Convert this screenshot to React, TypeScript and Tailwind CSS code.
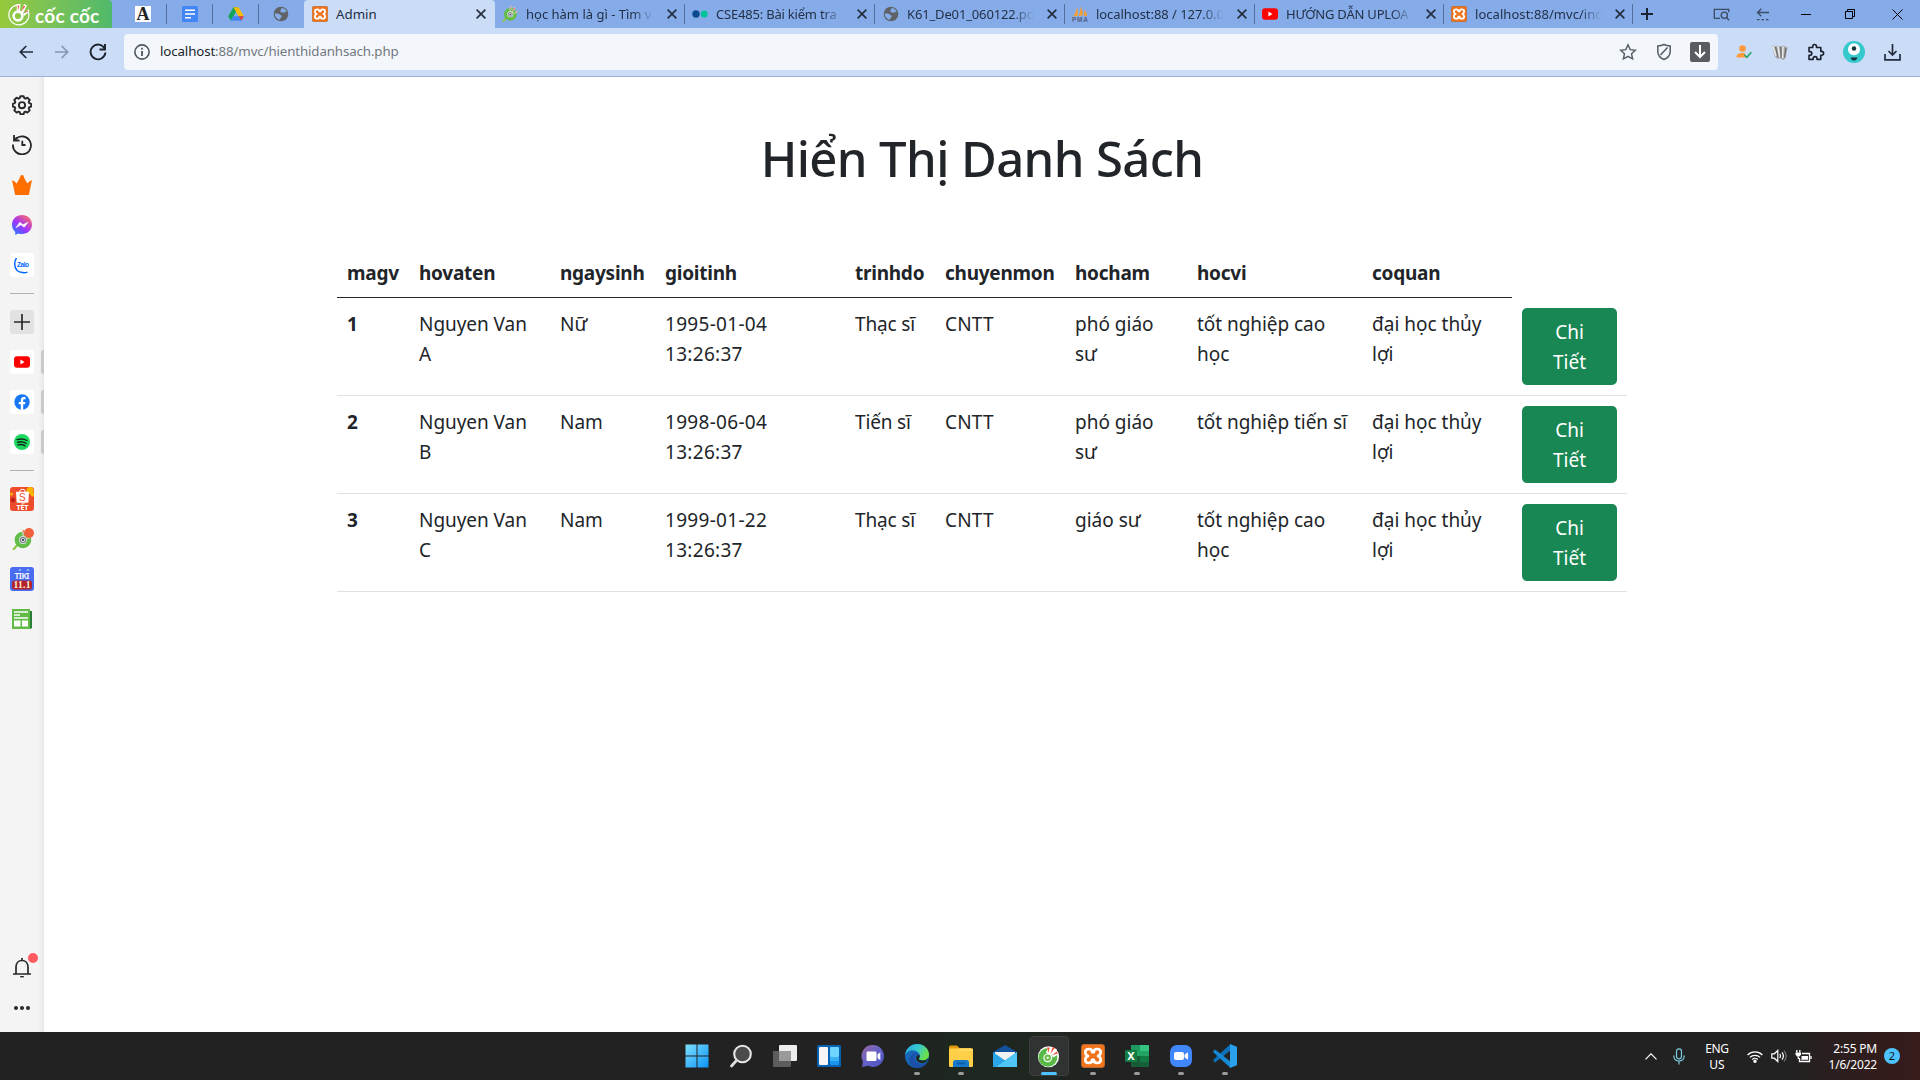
import React from "react";
import type { ReactNode } from "react";

/* ---------- shared logos ---------- */

function CocCocLogo({ size, ring = false }: { size: number; ring?: boolean }) {
  if (ring) {
    return (
      <svg width={size} height={size} viewBox="0 0 24 24">
        <path d="M9.500 3.200A10 10 0 1 0 21.300 9.500" fill="none" stroke="#fff" strokeWidth="1.200" />
        <circle cx="11" cy="14" r="4.400" fill="none" stroke="#fff" strokeWidth="2.600" />
        <path d="M9.800 9.500L9.500 2h4l-.5 8zM14 10l3-8 3 1.500-4 8zM16 12l6-5v3l-5 4z" fill="#fff" />
        <path d="M11 9l-.3-5.500h1.600zM14 9.500l2.800-6 1.500 1zM16 11.300l4.500-2.800.5 1.200z" fill="#f0523a" />
      </svg>
    );
  }
  return (
    <svg width={size} height={size} viewBox="0 0 24 24">
      <circle cx="12" cy="12.300" r="11" fill="#fff" />
      <circle cx="11.400" cy="13" r="6.800" fill="none" stroke="#58b947" strokeWidth="6" />
      <path d="M11 3L9.500 8l3 2 2.500.500L17 13l5-3-2-6z" fill="#fff" />
      <circle cx="11.200" cy="13.400" r="4.600" fill="#fff" />
      <circle cx="11.200" cy="13.400" r="2.300" fill="none" stroke="#6cc04a" strokeWidth="2.200" />
      <path d="M11.800 8.300L10.500 2.500h2.800zM14 9.500L16.300 2l2.200 1.200zM15.800 10.800l4.800-4 1 2z" fill="#f0523a" />
    </svg>
  );
}

function CocCocSearch({ size }: { size: number }) {
  return (
    <svg width={size} height={size} viewBox="0 0 24 24">
      <path d="M2 23l6-7" stroke="#8bc63f" strokeWidth="2.600" strokeLinecap="round" />
      <circle cx="12.500" cy="12.500" r="7" fill="#e6efe6" stroke="#62bd49" strokeWidth="5" />
      <circle cx="12.500" cy="12.500" r="3" fill="#e8e8ee" stroke="#7f8a96" strokeWidth="1.500" />
      <circle cx="12.500" cy="12.500" r="1.300" fill="#444" />
      <path d="M12.500 8.500l-.7-7.500h2.400zM15 9.400l3-7.600 2.300 1.400zM17 11l5.500-3.500.5 2z" fill="#f0604a" stroke="#dff0d8" strokeWidth=".7" />
    </svg>
  );
}

function Xampp({ size }: { size: number }) {
  return (
    <svg width={size} height={size} viewBox="0 0 24 24">
      <rect x=".5" y=".5" width="23" height="23" rx="2.400" fill="#f0741c" stroke="#b9662c" />
      <path
        d="M8 5C5.500 5 4.300 6.500 4.300 8.300c0 1.700 1 2.900 2.700 3.700-1.700.8-2.700 2-2.700 3.700C4.300 17.500 5.500 19 8 19c2.200 0 3.100-1.300 3.200-3.100h1.600c.1 1.800 1 3.100 3.200 3.100 2.500 0 3.700-1.500 3.700-3.300 0-1.700-1-2.900-2.700-3.700 1.700-.8 2.700-2 2.700-3.700C19.700 6.500 18.500 5 16 5c-2.200 0-3.100 1.300-3.200 3.100h-1.600C11.100 6.300 10.200 5 8 5z"
        fill="none"
        stroke="#fff"
        strokeWidth="2.700"
        strokeLinejoin="round"
      />
    </svg>
  );
}

function YouTube({ size }: { size: number }) {
  return (
    <svg width={size} height={size} viewBox="0 0 16 16">
      <rect x="0" y="2.300" width="16" height="11.400" rx="3" fill="#f00" />
      <path d="M6.400 5.600v4.800L10.500 8z" fill="#fff" />
    </svg>
  );
}

function Globe() {
  return (
    <svg width="16" height="16" viewBox="0 0 16 16">
      <circle cx="8" cy="8" r="7.300" fill="#5f6368" />
      <path
        d="M1.800 7.500c2.200-.3 4.200 0 5 1 .5.800 2 .6 2 1.800 0 1.300-1.800 1.200-1.800 3.400-2.800-.2-5.300-2.700-5.200-6.200zM8.500 2c2.300.2 4.200 1.500 5.200 3.600-1 .3-1.500 1.100-2.900.9-1.500-.2-3 .5-3.400-.9-.3-1.500 1.200-1.900 1.100-3.600z"
        fill="#85ace9"
      />
    </svg>
  );
}

/* ---------- tab strip ---------- */

function CloseX() {
  return (
    <svg width="10" height="10" viewBox="0 0 10 10" className="shrink-0">
      <path d="M.6.6l8.800 8.800M9.400.6L.6 9.400" stroke="#222c3c" strokeWidth="1.600" />
    </svg>
  );
}

function PinnedTab({ width, last, children }: { width: string; last?: boolean; children: ReactNode }) {
  return (
    <div className={`${width} relative flex h-7 items-center justify-center pr-px`}>
      {children}
      {!last && <span className="absolute right-0 top-1 h-5 w-px bg-[#54709c]" />}
    </div>
  );
}

function Tab({ width, icon, title, tracking, pad }: { width: string; icon: ReactNode; title: string; tracking: string; pad: string }) {
  return (
    <div className={`${width} ${pad} relative flex h-7 items-center pr-2`}>
      <span className="mr-2 flex w-4 shrink-0 justify-center">{icon}</span>
      <span
        className={`${tracking} mr-2 flex-1 overflow-hidden whitespace-nowrap text-[13px] leading-7 text-[#233048] [mask-image:linear-gradient(to_right,black_80%,transparent_96%)]`}
      >
        {title}
      </span>
      <CloseX />
      <span className="absolute right-0 top-1 h-5 w-px bg-[#54709c]" />
    </div>
  );
}

function TabStrip() {
  return (
    <div className="flex h-7 bg-[#85ace9]">
      <div className="flex h-7 w-28 shrink-0 items-center rounded-tr bg-linear-to-r from-[#97c93c] to-[#4fb96b] pl-[7px]">
        <CocCocLogo size={24} ring />
        <span className="ml-1 whitespace-nowrap pt-[3px] font-[Lato] text-[19px] font-bold leading-6 tracking-[0.25px] text-white">
          cốc cốc
        </span>
      </div>
      <div className="flex w-48 shrink-0 pl-2">
        <PinnedTab width="w-[47px]">
          <span className="flex h-4 w-4 items-center justify-center bg-white font-['Liberation_Serif'] text-[18px] font-bold leading-4 text-[#222]">A</span>
        </PinnedTab>
        <PinnedTab width="w-[46px]">
          <svg width="16" height="16" viewBox="0 0 16 16">
            <rect width="16" height="16" rx="1.500" fill="#4285f4" />
            <path d="M3 4.200h10M3 8h10M3 11.800h6" stroke="#fff" strokeWidth="1.600" />
          </svg>
        </PinnedTab>
        <PinnedTab width="w-[46px]">
          <svg width="16" height="14" viewBox="0 0 16 14">
            <path d="M5.400.3h5.200L8 4.900 2.700 13.800.2 9.300z" fill="#12a55b" />
            <path d="M5.400.3h5.200l5.200 9h-5.200z" fill="#fcbc05" />
            <path d="M5.300 9.300h10.500l-2.500 4.400H2.700z" fill="#4285f4" />
            <path d="M10.600 9.300h5.200l-2.400 4.300z" fill="#ea4335" />
          </svg>
        </PinnedTab>
        <PinnedTab width="w-[45px]" last>
          <Globe />
        </PinnedTab>
      </div>
      <div className="flex h-7 w-[191px] shrink-0 items-center rounded-t bg-[#cbdcf6] pl-2 pr-[9px]">
        <Xampp size={16} />
        <span className="ml-2 flex-1 text-[13.3px] leading-7 text-[#233048]">Admin</span>
        <CloseX />
      </div>
      <Tab width="w-[190px]" pad="pl-[7px]" icon={<CocCocSearch size={16} />} title="học hàm là gì - Tìm v" tracking="tracking-[0px]" />
      <Tab
        width="w-[190px]"
        pad="pl-[7px]"
        icon={
          <svg width="16" height="16" viewBox="0 0 16 16">
            <circle cx="4" cy="8" r="3.700" fill="#0b4a8f" />
            <circle cx="12.200" cy="8" r="3.500" fill="#00c39a" />
          </svg>
        }
        title="CSE485: Bài kiểm tra"
        tracking="tracking-[-0.2px]"
      />
      <Tab width="w-[190px]" pad="pl-[8px]" icon={<Globe />} title="K61_De01_060122.pd" tracking="tracking-[-0.15px]" />
      <Tab
        width="w-[190px]"
        pad="pl-[7px]"
        icon={
          <svg width="16" height="16" viewBox="0 0 16 16">
            <path d="M1 10.500C3 8 4.500 4.500 5 1c1 3 1 6 .5 9zM6.300 10C8 7 8.600 4 8.500.5c2 3 2.500 6 2 9zM11.500 9.800c.8-2 .9-4 .6-6 2 2 3 4 3.200 6z" fill="#f7a032" />
            <text x="0" y="15.500" fontSize="6.500" fontWeight="700" fontFamily="Liberation Sans" fill="#55608a" textLength="16">PMA</text>
          </svg>
        }
        title="localhost:88 / 127.0.0"
        tracking="tracking-[-0.05px]"
      />
      <Tab width="w-[189px]" pad="pl-[7px]" icon={<YouTube size={16} />} title="HƯỚNG DẪN UPLOA" tracking="tracking-[-0.2px]" />
      <Tab width="w-[189px]" pad="pl-[7px]" icon={<Xampp size={16} />} title="localhost:88/mvc/ind" tracking="tracking-[0.05px]" />
      <div className="flex flex-1 items-center">
        <svg width="12" height="12" viewBox="0 0 12 12" className="ml-2">
          <path d="M6 0v12M0 6h12" stroke="#1b2433" strokeWidth="2" />
        </svg>
        <div className="ml-auto flex items-center">
          <span className="flex w-[39px] justify-center">
            <svg width="18" height="13" viewBox="0 0 18 13" fill="none" stroke="#3c4a62" strokeWidth="1.300">
              <path d="M7 10.300H1.300V1.300h14.400v3" />
              <circle cx="11.300" cy="7.200" r="3.100" />
              <path d="M13.500 9.500l2.500 2.800" />
            </svg>
          </span>
          <span className="flex w-[43px] justify-center">
            <svg width="14" height="13" viewBox="0 0 14 13" fill="none" stroke="#3c4a62" strokeWidth="1.300">
              <path d="M13 4.500H1.500M5.300.7L1.500 4.500l3.800 3.800" />
              <path d="M1 11.700h12" strokeDasharray="2.500 2" />
            </svg>
          </span>
          <span className="flex w-[43px] justify-center">
            <span className="h-px w-[10px] bg-black" />
          </span>
          <span className="flex w-[47px] justify-center">
            <svg width="11" height="11" viewBox="0 0 11 11" fill="none" stroke="#000">
              <path d="M.5 2.500h7v7h-7zM2.500 2.500v-2h7v7h-2" />
            </svg>
          </span>
          <span className="flex w-[46px] justify-center">
            <svg width="11" height="11" viewBox="0 0 11 11" fill="none" stroke="#000">
              <path d="M.5.5l10 10M10.500.5l-10 10" />
            </svg>
          </span>
        </div>
      </div>
    </div>
  );
}

/* ---------- address bar ---------- */

function Toolbar() {
  return (
    <div className="flex h-[49px] items-center border-b border-[#a0b0d0] bg-[#cbdcf6]">
      <div className="flex w-31 shrink-0 items-center pl-[19px]">
        <svg width="14" height="14" viewBox="0 0 14 14" fill="none" stroke="#222c3c" strokeWidth="1.700">
          <path d="M14 7H1.500M7.300 1L1.300 7l6 6" />
        </svg>
        <svg width="14" height="14" viewBox="0 0 14 14" fill="none" stroke="#8795b0" strokeWidth="1.700" className="ml-[22px]">
          <path d="M0 7h12.500M6.700 1l6 6-6 6" />
        </svg>
        <svg width="18" height="18" viewBox="0 0 18 18" fill="none" stroke="#1b222e" strokeWidth="1.900" className="ml-5">
          <path d="M15.600 5.500A7.400 7.400 0 1 0 16.400 9.500" />
          <path d="M16 1v5.500h-5.500" />
        </svg>
      </div>
      <div className="flex h-9 w-[1594px] shrink-0 items-center rounded bg-[#f3f7fc] pl-[10px] pr-2">
        <svg width="16" height="16" viewBox="0 0 16 16">
          <circle cx="8" cy="8" r="7.100" fill="none" stroke="#50565f" strokeWidth="1.600" />
          <path d="M8 7v5M8 3.800v1.800" stroke="#50565f" strokeWidth="1.800" />
        </svg>
        <span className="ml-[10px] text-[13.3px] tracking-[-0.12px] text-[#737880]">
          <span className="text-[#22262c]">localhost</span>:88/mvc/hienthidanhsach.php
        </span>
        <div className="ml-auto flex items-center">
          <svg width="18" height="18" viewBox="0 0 18 18" fill="none" stroke="#565b63" strokeWidth="1.400">
            <path d="M9 1.800l2.200 4.800 5.200.6-3.900 3.500 1.100 5.200L9 13.300l-4.600 2.600 1.100-5.200L1.600 7.200l5.200-.6z" />
          </svg>
          <svg width="16" height="18" viewBox="0 0 16 18" fill="none" stroke="#565b63" strokeWidth="1.500" className="ml-[19px]">
            <path d="M8 1.500c2 1 4 1.400 6.200 1.500v5.500c0 4-2.500 6.500-6.200 8-3.700-1.500-6.200-4-6.200-8V3C4 2.900 6 2.500 8 1.500zM4.500 12l7-7.500" />
          </svg>
          <span className="ml-[18px] flex h-5 w-5 items-center justify-center rounded-xs bg-[#5a5c60]">
            <svg width="12" height="14" viewBox="0 0 12 14" fill="none" stroke="#fff" strokeWidth="2">
              <path d="M6 0v12M1 7l5 5 5-5" />
            </svg>
          </span>
        </div>
      </div>
      <div className="flex flex-1 items-center justify-between pl-[18px] pr-[19px]">
        <svg width="16" height="14" viewBox="0 0 16 14">
          <circle cx="6.500" cy="3.600" r="3.300" fill="#ff9a3c" />
          <path d="M.5 12.500c0-3.500 2.500-4.500 6-4.500 1.500 0 2.500.3 3.300.9L8 10.500l2 2z" fill="#ff9a3c" />
          <path d="M8.300 9.800l2.500 2.500 4.500-5" fill="none" stroke="#1fa463" strokeWidth="1.500" />
        </svg>
        <svg width="17" height="17" viewBox="0 0 17 17">
          <path d="M1 1l3.500 1.500L7 1.500l2.500 1L12 1.500l4.500 2-2 10.500-2.500 2-3-2-2.500 1-3-3z" fill="#a5a5a5" />
          <path d="M2 2l3 10M7 2l1.500 11M12 2.500L11.500 14" stroke="#e9e9e9" strokeWidth="1.600" />
          <path d="M4.500 3l2.500 10M9.800 3l.4 10.500M15 4l-1.500 9.500" stroke="#666" strokeWidth="1.100" />
        </svg>
        <svg width="18" height="18" viewBox="0 0 18 18" fill="none" stroke="#1b222e" strokeWidth="1.600" strokeLinejoin="round">
          <path d="M2 4.500h3.700V3.400a1.900 1.900 0 0 1 3.800 0v1.100h4.300v3.900h.9a1.900 1.900 0 0 1 0 3.800h-.9v4.200H10v-.9a1.900 1.900 0 0 0-3.800 0v.9H2v-4h.9a1.900 1.900 0 0 0 0-3.800H2z" />
        </svg>
        <svg width="22" height="22" viewBox="0 0 22 22">
          <circle cx="11" cy="11" r="11" fill="#35c8cd" />
          <circle cx="11" cy="8.300" r="6" fill="#fff" />
          <circle cx="11" cy="7.500" r="2.200" fill="#15343c" />
          <path d="M7.800 16.600h6.400a3.200 2.800 0 0 1-6.400 0z" fill="#15343c" />
        </svg>
        <svg width="17" height="17" viewBox="0 0 17 17" fill="none" stroke="#222c3c" strokeWidth="1.700">
          <path d="M8.500 0v10.500M4.500 7l4 4 4-4M1 10v5.800h15V10" />
        </svg>
      </div>
    </div>
  );
}

/* ---------- browser sidebar ---------- */

function SideItem({ children, open }: { children: ReactNode; open?: boolean }) {
  return (
    <div className="relative flex h-10 w-11 shrink-0 items-center justify-center">
      {children}
      {open && <span className="absolute right-0 top-2 h-6 w-[3px] rounded-l bg-[#c9c9c9]" />}
    </div>
  );
}

function Tile({ bg, children }: { bg: string; children: ReactNode }) {
  return <span className={`${bg} flex h-6 w-6 items-center justify-center overflow-hidden rounded-[3px]`}>{children}</span>;
}

function Rule() {
  return (
    <div className="flex h-[17px] shrink-0 items-center justify-center">
      <span className="h-px w-6 bg-[#b2b2b2]" />
    </div>
  );
}

function Sidebar() {
  return (
    <aside className="flex w-11 shrink-0 flex-col bg-[linear-gradient(to_right,#f4f4f4_38px,#e8e8e8_44px)] pb-1 pt-2">
      <SideItem>
        <svg width="20" height="20" viewBox="0 0 20 20" fill="none" stroke="#26282b" strokeWidth="1.900" strokeLinejoin="round">
          <path d="M8.300 1.200h3.400l.6 2 1.200.5 1.900-1 2.300 2.300-1 1.900.5 1.300 2 .6v2.800l-2 .6-.5 1.200 1 1.900-2.300 2.300-1.900-1-1.200.5-.6 2H8.300l-.6-2-1.200-.5-1.900 1-2.300-2.300 1-1.900-.5-1.200-2-.6V8.800l2-.6.5-1.300-1-1.900 2.300-2.300 1.900 1 1.200-.5z" />
          <circle cx="10" cy="10.200" r="3.100" />
        </svg>
      </SideItem>
      <SideItem>
        <svg width="20" height="20" viewBox="0 0 20 20" fill="none" stroke="#26282b" strokeWidth="1.800">
          <path d="M1 9.500A9 9 0 1 0 3.800 3.800" strokeDasharray="60" />
          <path d="M2 0v5.500h5.500M2 5.500l3-3M10.300 5.800V10h3.200" />
        </svg>
      </SideItem>
      <SideItem>
        <svg width="20" height="20" viewBox="0 0 20 20">
          <path d="M0 5.300c1.500.3 3.300 1.500 4.500 3.200C6 6.500 7.800 3.500 8.600.6c.5-.8 2.300-.8 2.800 0 .8 2.900 2.600 5.900 4.100 7.900 1.200-1.700 3-2.900 4.500-3.200L16.800 20H3.200z" fill="#ff6f00" />
        </svg>
      </SideItem>
      <SideItem>
        <svg width="20" height="20" viewBox="0 0 20 20">
          <defs>
            <linearGradient id="msg" x1="0" y1="1" x2=".8" y2="0">
              <stop offset="0" stopColor="#0a8cff" />
              <stop offset=".5" stopColor="#a033ff" />
              <stop offset="1" stopColor="#ff6a68" />
            </linearGradient>
          </defs>
          <path d="M10 0C4.300 0 0 4.100 0 9.700c0 2.900 1.200 5.400 3.200 7.100V20l3-1.600c1.200.4 2.500.6 3.800.6 5.700 0 10-4 10-9.500S15.700 0 10 0z" fill="url(#msg)" />
          <path d="M4 12.500l3.800-5.200L11 9.800l5-2.600-3.800 5-3.200-2.400z" fill="#fff" stroke="#fff" strokeWidth=".6" />
        </svg>
      </SideItem>
      <SideItem>
        <Tile bg="bg-white">
          <svg width="20" height="20" viewBox="0 0 20 20">
            <path d="M4.500 3C2 6 2 12 5 15.500c3 2.500 8 2.500 10.500 1.600" fill="none" stroke="#0068ff" strokeWidth="1.500" />
            <text x="5" y="11.800" fontSize="6.500" fontWeight="700" fontFamily="Liberation Sans" fill="#0068ff" textLength="12">Zalo</text>
          </svg>
        </Tile>
      </SideItem>
      <Rule />
      <SideItem>
        <Tile bg="bg-[#e2e2e2]">
          <svg width="16" height="16" viewBox="0 0 16 16">
            <path d="M8 0v16M0 8h16" stroke="#26282b" strokeWidth="1.700" />
          </svg>
        </Tile>
      </SideItem>
      <SideItem open>
        <Tile bg="bg-white">
          <YouTube size={16} />
        </Tile>
      </SideItem>
      <SideItem open>
        <Tile bg="bg-white">
          <svg width="16" height="16" viewBox="0 0 16 16">
            <circle cx="8" cy="8" r="7.700" fill="#1877f2" />
            <path d="M6.800 15.900V10.300h-2V8h2V6.200c0-2 1.200-3.100 3-3.100.9 0 1.700.1 1.700.1v2h-1c-1 0-1.300.6-1.300 1.200V8h2.200l-.4 2.300H9.200v5.600z" fill="#fff" />
          </svg>
        </Tile>
      </SideItem>
      <SideItem open>
        <Tile bg="bg-white">
          <svg width="16" height="16" viewBox="0 0 16 16">
            <circle cx="8" cy="8" r="8" fill="#1ed760" />
            <path d="M3 5.600c3.300-1 7.200-.7 10 .9M3.500 8.300c2.800-.8 6-.5 8.600 1M3.900 10.900c2.300-.6 5-.4 7.200.9" fill="none" stroke="#0d2b17" strokeWidth="1.400" strokeLinecap="round" />
          </svg>
        </Tile>
      </SideItem>
      <Rule />
      <SideItem>
        <Tile bg="bg-[#ee4d2d]">
          <svg width="24" height="24" viewBox="0 0 24 24">
            <circle cx="20" cy="3.500" r="3.500" fill="#f8b600" />
            <circle cx="22.500" cy="7.500" r="2" fill="#f8b600" />
            <circle cx="3" cy="13" r="2.500" fill="#c62418" />
            <circle cx="1.500" cy="7" r="1.500" fill="#f8b600" />
            <path d="M9.700 5a2.800 2.800 0 0 1 5.600 0" fill="none" stroke="#fff" />
            <path d="M6 4.800h13l-.7 11H6.700z" fill="#fff" />
            <text x="12.400" y="13.800" fontSize="10" fontFamily="Liberation Sans" fill="#ee4d2d" textAnchor="middle">S</text>
            <text x="12.400" y="23" fontSize="7" fontWeight="700" fontFamily="Noto Sans" fill="#fff" textAnchor="middle">TẾT</text>
          </svg>
        </Tile>
      </SideItem>
      <SideItem>
        <CocCocSearch size={21} />
        <span className="absolute right-[10px] top-[9px] h-[10px] w-[10px] rounded-full bg-[#f2613c]" />
      </SideItem>
      <SideItem>
        <Tile bg="bg-[#4a6cf0]">
          <svg width="24" height="24" viewBox="0 0 24 24">
            <text x="12" y="11.800" fontSize="8.500" fontWeight="600" fontFamily="Noto Sans" fill="#fff" textAnchor="middle" textLength="15">TIKI</text>
            <path d="M9 3.800l1-1.500 1 1.500M17 3.800l1-1.500 1 1.500" fill="none" stroke="#cfe" strokeWidth=".8" />
            <rect x="2" y="13.500" width="20" height="9" rx="2.500" fill="#b3232d" />
            <text x="12" y="21.300" fontSize="9.500" fontWeight="700" fontFamily="Liberation Serif" fill="#fff3d6" textAnchor="middle" textLength="17">11.1</text>
          </svg>
        </Tile>
      </SideItem>
      <SideItem>
        <svg width="20" height="20" viewBox="0 0 20 20">
          <path d="M17 2h3v17l-2 1h-3z" fill="#2a7d36" />
          <path d="M0 0h18v20H0z" fill="#62bb46" />
          <path d="M2 3h14M2 6h6M2 9h14" stroke="#fff" strokeWidth="1.300" />
          <path d="M2 11.500h6.500v6H2zM10 11.500h6v6h-6z" fill="#fff" />
        </svg>
      </SideItem>
      <div className="flex-1" />
      <SideItem>
        <svg width="18" height="20" viewBox="0 0 18 20" fill="none" stroke="#26282b" strokeWidth="1.700">
          <path d="M3 15.500V9c0-4 2.500-6.500 6-6.500S15 5 15 9v6.500M0 16h18M9 0v2.500" />
          <path d="M7.200 18.700h3.600" strokeWidth="1.400" />
        </svg>
        <span className="absolute right-[6px] top-[5px] h-[10px] w-[10px] rounded-full bg-[#ff5a60]" />
      </SideItem>
      <SideItem>
        <span className="flex gap-[2px]">
          <i className="h-1 w-1 rounded-full bg-[#26282b]" />
          <i className="h-1 w-1 rounded-full bg-[#26282b]" />
          <i className="h-1 w-1 rounded-full bg-[#26282b]" />
        </span>
      </SideItem>
    </aside>
  );
}

/* ---------- page content ---------- */

const headers = ["magv", "hovaten", "ngaysinh", "gioitinh", "trinhdo", "chuyenmon", "hocham", "hocvi", "coquan"];

const rows = [
  ["1", "Nguyen Van A", "Nữ", "1995-01-04 13:26:37", "Thạc sĩ", "CNTT", "phó giáo sư", "tốt nghiệp cao học", "đại học thủy lợi"],
  ["2", "Nguyen Van B", "Nam", "1998-06-04 13:26:37", "Tiến sĩ", "CNTT", "phó giáo sư", "tốt nghiệp tiến sĩ", "đại học thủy lợi"],
  ["3", "Nguyen Van C", "Nam", "1999-01-22 13:26:37", "Thạc sĩ", "CNTT", "giáo sư", "tốt nghiệp cao học", "đại học thủy lợi"],
];

const cellStyles = [
  "font-bold",
  "tracking-[-0.05px]",
  "tracking-[-0.05px]",
  "tracking-[0.3px]",
  "tracking-[-0.15px]",
  "tracking-[0.2px]",
  "tracking-[0px]",
  "tracking-[-0.05px]",
  "tracking-[0px]",
];

const breakBefore: Record<number, boolean> = { 1: true, 3: true, 6: true, 7: true, 8: true };

function CellText({ text, col }: { text: string; col: number }) {
  const at = text.lastIndexOf(" ");
  if (!breakBefore[col] || at < 0 || text === "giáo sư" || text === "tốt nghiệp tiến sĩ") return <>{text}</>;
  return (
    <>
      {text.slice(0, at)}
      <br />
      {text.slice(at + 1)}
    </>
  );
}

function Page() {
  return (
    <main className="flex-1 bg-white text-[#212529]">
      <h1 className="h-[170px] pt-[51px] text-center text-[49px] font-medium leading-[60px] tracking-[-0.6px]">Hiển Thị Danh Sách</h1>
      <table className="ml-[293px] w-[1290px] table-fixed border-separate border-spacing-0 text-[19px] leading-[30px]">
        <colgroup>
          <col className="w-[72px]" />
          <col className="w-[141px]" />
          <col className="w-[105px]" />
          <col className="w-[190px]" />
          <col className="w-[90px]" />
          <col className="w-[130px]" />
          <col className="w-[122px]" />
          <col className="w-[175px]" />
          <col className="w-[150px]" />
          <col className="w-[115px]" />
        </colgroup>
        <thead>
          <tr className="h-[51px]">
            {headers.map((h) => (
              <th key={h} className="whitespace-nowrap border-b border-[#212529] pb-0 pl-[10px] pt-[2px] text-left font-bold tracking-[-0.25px]">
                {h}
              </th>
            ))}
            <th />
          </tr>
        </thead>
        <tbody>
          {rows.map((r) => (
            <tr key={r[0]} className="h-[98px] align-top">
              {r.map((c, i) => (
                <td key={i} className={`whitespace-nowrap border-b border-[#dee2e6] pl-[10px] pt-[11px] ${cellStyles[i]}`}>
                  <CellText text={c} col={i} />
                </td>
              ))}
              <td className="border-b border-[#dee2e6] p-[10px]">
                <button className="block h-[77px] w-[95px] rounded-[5px] bg-[#198754] text-center leading-[30px] text-white">
                  Chi
                  <br />
                  Tiết
                </button>
              </td>
            </tr>
          ))}
        </tbody>
      </table>
    </main>
  );
}

/* ---------- taskbar ---------- */

function TaskItem({ children, state }: { children: ReactNode; state?: "open" | "active" }) {
  return (
    <div className="flex h-12 w-11 items-center justify-center">
      <div
        className={`relative flex h-10 w-10 items-center justify-center rounded ${state === "active" ? "border border-[#3c3f3d] bg-[#303331]" : ""}`}
      >
        {children}
        {state === "open" && <span className="absolute bottom-[1px] left-[17px] h-[3px] w-[6px] rounded-full bg-[#9a9a9a]" />}
        {state === "active" && <span className="absolute bottom-0 left-[11px] h-[3px] w-4 rounded-full bg-[#4cc2ff]" />}
      </div>
    </div>
  );
}

function Taskbar() {
  return (
    <footer className="flex h-12 shrink-0 items-center bg-[linear-gradient(to_right,#222_0%,#222_46%,#1d271f_50%,#1f2620_54%,#222_58%,#222_93%,#331c1c_98%,#371b1b_100%)]">
      <div className="flex pl-[674.5px]">
        <TaskItem>
          <svg width="24" height="24" viewBox="0 0 24 24">
            <defs>
              <linearGradient id="win" x1="0" y1="0" x2="1" y2="1">
                <stop offset="0" stopColor="#7fe0ff" />
                <stop offset="1" stopColor="#0a93f5" />
              </linearGradient>
            </defs>
            <path d="M.5.5h11v11H.5zM12.500.5h11v11h-11zM.5 12.500h11v11H.5zM12.500 12.500h11v11h-11z" fill="url(#win)" />
          </svg>
        </TaskItem>
        <TaskItem>
          <svg width="24" height="24" viewBox="0 0 24 24">
            <circle cx="13.500" cy="10" r="8.300" fill="#4b4b4b" stroke="#e4e6e8" strokeWidth="2.100" />
            <path d="M7.500 16.500L2.500 22" stroke="#dcdcdc" strokeWidth="2.800" strokeLinecap="round" />
          </svg>
        </TaskItem>
        <TaskItem>
          <svg width="24" height="24" viewBox="0 0 24 24">
            <rect x="6" y="1" width="18" height="16" rx="1" fill="#ededed" />
            <rect x="0" y="7" width="18" height="16" rx="1" fill="#5d5d5d" />
            <path d="M6 7h12v10H6z" fill="#9a9a9a" />
          </svg>
        </TaskItem>
        <TaskItem>
          <svg width="24" height="24" viewBox="0 0 24 24">
            <rect x="0" y="1" width="24" height="22" rx="1.500" fill="#0862b4" />
            <rect x="2" y="3" width="9" height="18" rx="1" fill="#f6f6f6" />
            <rect x="13" y="3" width="9" height="10" rx="1" fill="#6fd4ff" />
            <rect x="13" y="13" width="9" height="8" rx="1" fill="#1c95ee" />
            <path d="M13 13h9v4h-9z" fill="#38b1f7" />
          </svg>
        </TaskItem>
        <TaskItem>
          <svg width="24" height="24" viewBox="0 0 24 24">
            <defs>
              <linearGradient id="teams" x1="0" y1="0" x2="1" y2="1">
                <stop offset="0" stopColor="#9b6a9e" />
                <stop offset=".5" stopColor="#6461c8" />
                <stop offset="1" stopColor="#4a51c0" />
              </linearGradient>
            </defs>
            <path d="M12 1a11 11 0 1 1-5 20.800L1 23l1-5.500A11 11 0 0 1 12 1z" fill="url(#teams)" />
            <rect x="5.500" y="7.500" width="10" height="9.500" rx="1.300" fill="#fff" />
            <path d="M16.500 10.500l2.800-2.200v8l-2.800-2.200z" fill="#fff" />
          </svg>
        </TaskItem>
        <TaskItem state="open">
          <svg width="24" height="24" viewBox="0 0 24 24">
            <defs>
              <linearGradient id="edgeA" x1="0" y1="0" x2="1" y2=".4">
                <stop offset="0" stopColor="#2aa6dd" />
                <stop offset=".55" stopColor="#35c9d0" />
                <stop offset="1" stopColor="#6be04c" />
              </linearGradient>
            </defs>
            <circle cx="12" cy="12" r="12" fill="#1567b8" />
            <path d="M.1 11C.8 4.600 6 0 12.200 0 19 0 24 5 24 10.500c0 4-2.800 6-6 6-2.800 0-4.500-1-4-2.300 1.200-1.200 1.300-2.700.5-4.200C12.800 7 9 5.500 5.500 6.500 3 7.300 1 9 .1 11z" fill="url(#edgeA)" />
            <path d="M13.300 9.500c-2 0-3.800 2.300-3.600 5 .3 4 4 6.500 8.300 5.500 1.600-.3 3-1 4-2-3 5-8.500 7-13 5.200-4-1.700-5.500-6-4.200-9.500 1.300-3.400 5-5.500 8.500-4.200z" fill="#1b4fa8" />
            <path d="M14 14.200c-.5 1.300 1.200 2.300 4 2.300 2 0 4-.8 5.200-2.400-.5 2-1.300 3.300-2.500 4.200-3 1.700-7.700 1-9.200-2.300-1-2.500.2-5 2-5.300 1.500 1 1.500 2.500.5 3.500z" fill="#1e2b25" />
          </svg>
        </TaskItem>
        <TaskItem state="open">
          <svg width="24" height="24" viewBox="0 0 24 24">
            <path d="M0 3.500C0 2.500.6 1.500 1.600 1.500H8l2.500 2.500H22v5H0z" fill="#e09a0b" />
            <rect x="0" y="4.500" width="24" height="18.500" rx="1.300" fill="#ffcf48" />
            <path d="M8 7l3-2.500h11.700c.7 0 1.300.6 1.300 1.300V7z" fill="#ffd963" />
            <path d="M4 23v-4.500A2.500 2.500 0 0 1 6.500 16h11a2.500 2.500 0 0 1 2.500 2.500V23z" fill="#1678c8" />
            <path d="M8 19.500h8" stroke="#0c58a0" strokeWidth="1.500" />
          </svg>
        </TaskItem>
        <TaskItem>
          <svg width="24" height="24" viewBox="0 0 24 24">
            <path d="M0 8L12 1l12 7v3H0z" fill="#12519c" />
            <path d="M2 8h20v8H2z" fill="#f2f2f2" />
            <path d="M0 8l12 8.500L24 8v15H0z" fill="#2ba3e8" />
            <path d="M24 8v15H3z" fill="#4fc6f4" />
          </svg>
        </TaskItem>
        <TaskItem state="active">
          <CocCocLogo size={23} />
        </TaskItem>
        <TaskItem state="open">
          <Xampp size={24} />
        </TaskItem>
        <TaskItem state="open">
          <svg width="24" height="24" viewBox="0 0 24 24">
            <rect x="6" y="1" width="18" height="22" rx="1.300" fill="#21a366" />
            <path d="M6 1h9v6H6z" fill="#1f9a60" />
            <path d="M15 1h7.700c.7 0 1.300.6 1.300 1.300V7h-9z" fill="#33c481" />
            <path d="M6 12h9v11H6z" fill="#185c37" />
            <path d="M15 12h9v5.500h-9z" fill="#107c41" />
            <path d="M15 17.500h9V22c0 .6-.5 1-1 1h-8z" fill="#17613a" />
            <rect x="0" y="6" width="12" height="12" rx="1" fill="#107c41" />
            <text x="6" y="16" fontSize="11" fontWeight="700" fontFamily="Noto Sans" fill="#fff" textAnchor="middle">X</text>
          </svg>
        </TaskItem>
        <TaskItem state="open">
          <svg width="24" height="24" viewBox="0 0 24 24">
            <rect x="1" y="1" width="22" height="22" rx="7" fill="#4087fc" />
            <rect x="5" y="8" width="10" height="8" rx="2" fill="#fff" />
            <path d="M15.500 10.800L19 8.300v7.400l-3.500-2.500z" fill="#fff" />
          </svg>
        </TaskItem>
        <TaskItem state="open">
          <svg width="24" height="24" viewBox="0 0 24 24">
            <path d="M17.500 6.500L2 18.500.3 17v-1.200L17.500 0z" fill="#0b70b8" />
            <path d="M17.500 17.500L2 5.500.3 7v1.200L17.500 24z" fill="#1489d4" />
            <path d="M17 0l6.300 2.600c.4.2.7.6.7 1v16.800c0 .4-.3.8-.7 1L17 24z" fill="#2ba1ee" />
          </svg>
        </TaskItem>
      </div>
      <div className="ml-auto flex items-center pr-5 text-[12px] leading-4 text-white">
        <svg width="12" height="7" viewBox="0 0 12 7" fill="none" stroke="#fff" strokeWidth="1.200">
          <path d="M.5 6.300L6 .8l5.500 5.500" />
        </svg>
        <svg width="12" height="17" viewBox="0 0 12 17" fill="none" stroke="#7ccbe0" strokeWidth="1.200" className="ml-4">
          <rect x="3.500" y=".8" width="5" height="10" rx="2.500" />
          <path d="M.8 7.500c0 3.500 2 5.500 5.200 5.500s5.200-2 5.200-5.500M6 13v3.500" />
        </svg>
        <div className="ml-5 w-6 pt-px text-center">
          <div className="-ml-1 w-8 tracking-[-0.3px]">ENG</div>
          <div className="-ml-1 w-8">US</div>
        </div>
        <svg width="16" height="13" viewBox="0 0 16 13" fill="none" stroke="#fff" strokeWidth="1.200" className="ml-[18px]">
          <path d="M.6 5a10.400 10.400 0 0 1 14.800 0M2.900 7.400a7.200 7.200 0 0 1 10.200 0M5.200 9.600a4 4 0 0 1 5.600 0" />
          <circle cx="8" cy="11.300" r="1.100" fill="#fff" />
        </svg>
        <svg width="16" height="14" viewBox="0 0 16 14" fill="none" stroke="#fff" strokeWidth="1.200" className="ml-2">
          <path d="M.8 4.800h2.500L6.800 1.500v11L3.300 9.200H.8zM8.800 5c.8 1.200.8 2.800 0 4M11 3.300c1.700 2.200 1.700 5.200 0 7.400" />
          <path d="M13 1.500c2.600 3.300 2.600 7.700 0 11" stroke="#777" />
        </svg>
        <svg width="17" height="13" viewBox="0 0 17 13" fill="none" stroke="#fff" strokeWidth="1.300" className="ml-2">
          <path d="M7 3.500h7.500v8H4.500V8" />
          <path d="M6.500 8.800V6H13v3.800H6z" fill="#fff" stroke="none" />
          <path d="M16 6v3M1.800 0v2.500M4.800 0v2.500M3.300 6.500V9" />
          <path d="M.5 2.500h5.600v2L4.500 6.500H2L.5 4.500z" fill="#fff" stroke="none" />
        </svg>
        <div className="ml-[14px] w-[51px] pt-px text-right">
          <div className="-ml-4 tracking-[-0.2px]">2:55 PM</div>
          <div className="-ml-4 tracking-[-0.2px]">1/6/2022</div>
        </div>
        <span className="ml-[7px] flex h-4 w-4 items-center justify-center rounded-full bg-[#4cc2ff] text-[11px] leading-4 text-[#111]">2</span>
      </div>
    </footer>
  );
}

export default function App() {
  return (
    <div className="flex h-[1080px] w-[1920px] flex-col overflow-hidden font-['Noto_Sans',sans-serif]">
      <TabStrip />
      <Toolbar />
      <div className="flex min-h-0 flex-1">
        <Sidebar />
        <Page />
      </div>
      <Taskbar />
    </div>
  );
}
